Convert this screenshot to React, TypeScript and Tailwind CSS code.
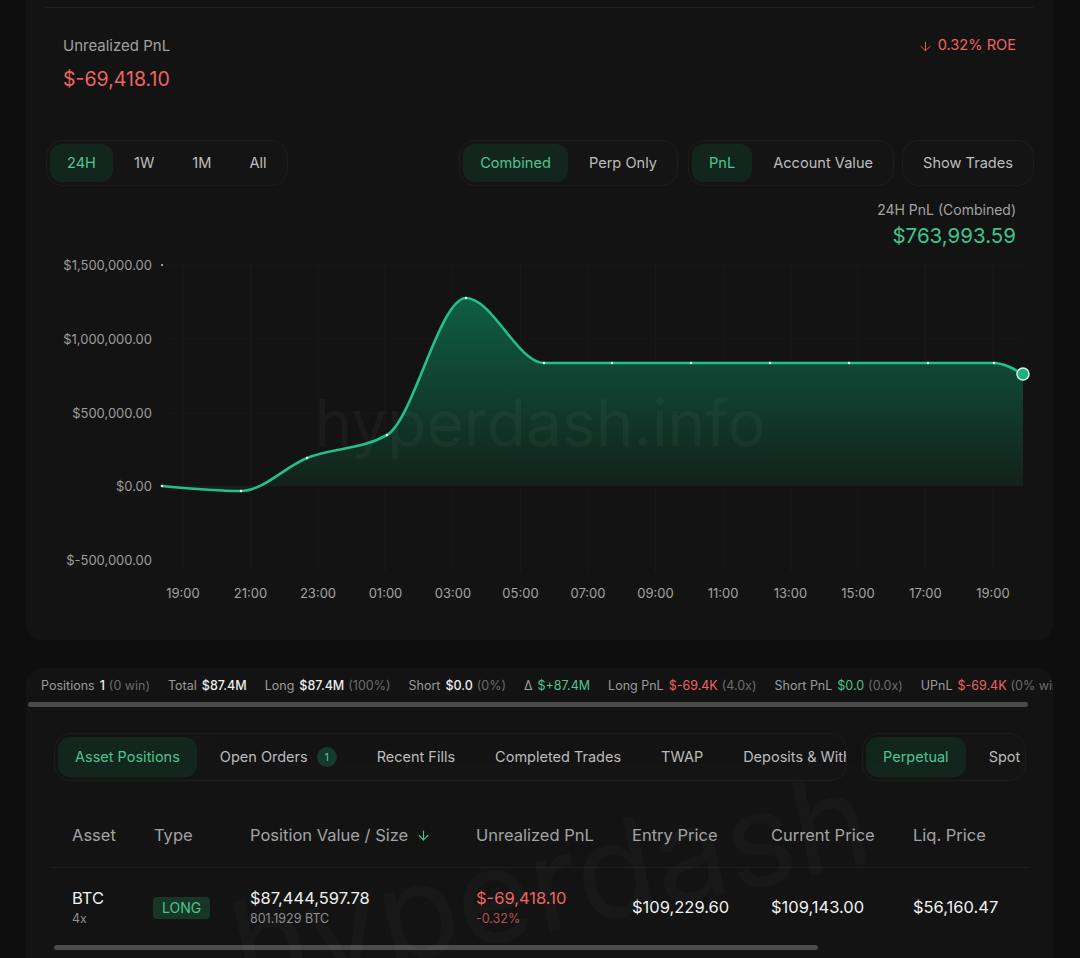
import { ArrowDown } from 'lucide-react';

type Pt = [number, number];

// chart points in page pixels (the svg viewBox is laid over the card)
const points: Pt[] = [
  [162, 486], [241, 491], [307, 458], [387, 435], [466, 298], [544, 363], [612, 363],
  [691, 363], [770, 363], [849, 363], [928, 363], [994, 363], [1023, 374],
];

const yTicks = [
  { y: 265, label: '$1,500,000.00' },
  { y: 339, label: '$1,000,000.00' },
  { y: 413, label: '$500,000.00' },
  { y: 486, label: '$0.00' },
  { y: 560, label: '$-500,000.00' },
];

const xTicks = ['19:00', '21:00', '23:00', '01:00', '03:00', '05:00', '07:00', '09:00', '11:00', '13:00', '15:00', '17:00', '19:00'];

function monotonePath(p: Pt[]) {
  const n = p.length;
  const s: number[] = [];
  for (let i = 0; i < n - 1; i++) s.push((p[i + 1][1] - p[i][1]) / (p[i + 1][0] - p[i][0]));
  const t: number[] = new Array(n).fill(0);
  for (let i = 1; i < n - 1; i++) {
    const h0 = p[i][0] - p[i - 1][0];
    const h1 = p[i + 1][0] - p[i][0];
    const s0 = s[i - 1];
    const s1 = s[i];
    const m = (s0 * h1 + s1 * h0) / (h0 + h1);
    t[i] = (Math.sign(s0) + Math.sign(s1)) * Math.min(Math.abs(s0), Math.abs(s1), 0.5 * Math.abs(m)) || 0;
  }
  t[0] = (3 * s[0] - t[1]) / 2;
  t[n - 1] = (3 * s[n - 2] - t[n - 2]) / 2;
  let d = `M${p[0][0]},${p[0][1]}`;
  for (let i = 0; i < n - 1; i++) {
    const dx = (p[i + 1][0] - p[i][0]) / 3;
    d += ` C${p[i][0] + dx},${p[i][1] + dx * t[i]} ${p[i + 1][0] - dx},${p[i + 1][1] - dx * t[i + 1]} ${p[i + 1][0]},${p[i + 1][1]}`;
  }
  return d;
}

function PnlChart() {
  const line = monotonePath(points);
  const area = `${line} L1023,486 L162,486 Z`;
  const last = points[points.length - 1];
  return (
    <svg width={1027} height={360} viewBox="26 252 1027 360" className="block">
      <defs>
        <linearGradient id="pnlFill" gradientUnits="userSpaceOnUse" x1="0" y1="298" x2="0" y2="486">
          <stop offset="0" stopColor="#0e5e43" />
          <stop offset="1" stopColor="#13211b" />
        </linearGradient>
      </defs>
      {yTicks.map((t) => (
        <line key={t.y} x1={162} x2={1023} y1={t.y} y2={t.y} stroke="#191919" strokeWidth={1} />
      ))}
      {xTicks.map((_, i) => {
        const x = 183 + i * 67.5;
        return <line key={i} x1={x} x2={x} y1={262} y2={572} stroke="#191919" strokeWidth={1} />;
      })}
      <path d={area} fill="url(#pnlFill)" />
      <text
        x={540}
        y={446}
        textAnchor="middle"
        fontSize={64}
        fontFamily="Inter, sans-serif"
        fill="#ffffff"
        fillOpacity={0.035}
      >
        hyperdash.info
      </text>
      <path d={line} fill="none" stroke="#22c08a" strokeWidth={2.6} strokeLinecap="round" />
      {points.slice(0, -1).map(([x, y]) => (
        <circle key={x} cx={x} cy={y} r={1.2} fill="#e8fff5" />
      ))}
      <circle cx={162} cy={265} r={1} fill="#d0d0d0" />
      <circle cx={last[0]} cy={last[1]} r={6} fill="#1cb07e" stroke="#d6f3e6" strokeWidth={1.5} />
      {yTicks.map((t) => (
        <text key={t.label} x={152} y={t.y + 4.5} textAnchor="end" fontSize={13} fontFamily="Inter, sans-serif" fill="#9d9d9d">
          {t.label}
        </text>
      ))}
      {xTicks.map((l, i) => (
        <text key={i} x={183 + i * 67.5} y={597.5} textAnchor="middle" fontSize={13} fontFamily="Inter, sans-serif" fill="#a3a3a3">
          {l}
        </text>
      ))}
    </svg>
  );
}

function Seg({ items, active }: { items: string[]; active?: number }) {
  return (
    <div className="flex gap-1 rounded-2xl border border-[#1d1d1d] bg-[#141414] p-[3px]">
      {items.map((it, i) => (
        <button
          key={it}
          className={
            i === active
              ? 'h-[38px] rounded-xl bg-[#13261e] px-[17px] pt-[1px] text-[14.6px] text-[#4cc58f]'
              : 'h-[38px] rounded-xl px-[17px] pt-[1px] text-[14.6px] text-[#bdbdbd]'
          }
        >
          {it}
        </button>
      ))}
    </div>
  );
}

type Stat = { label: string; value: string; tone?: 'green' | 'red'; note?: string };

const stats: Stat[] = [
  { label: 'Positions', value: '1', note: '(0 win)' },
  { label: 'Total', value: '$87.4M' },
  { label: 'Long', value: '$87.4M', note: '(100%)' },
  { label: 'Short', value: '$0.0', note: '(0%)' },
  { label: 'Δ', value: '$+87.4M', tone: 'green' },
  { label: 'Long PnL', value: '$-69.4K', tone: 'red', note: '(4.0x)' },
  { label: 'Short PnL', value: '$0.0', tone: 'green', note: '(0.0x)' },
  { label: 'UPnL', value: '$-69.4K', tone: 'red', note: '(0% win)' },
];

function StatsBar() {
  return (
    <div className="flex h-[34px] w-[1027px] items-center gap-[18px] overflow-hidden whitespace-nowrap pl-[15px] pt-[3px] text-[12.5px]">
      {stats.map((s) => (
        <div key={s.label} className="flex shrink-0 items-center gap-[5px]">
          <span className="text-[#9b9b9b]">{s.label}</span>
          <span
            className={
              s.tone === 'green'
                ? 'text-[#4cc58f]'
                : s.tone === 'red'
                  ? 'text-[#ef6461]'
                  : 'font-medium text-[#ededed]'
            }
          >
            {s.value}
          </span>
          {s.note && <span className="-ml-[1px] text-[#6b6b6b]">{s.note}</span>}
        </div>
      ))}
    </div>
  );
}

const tabs = ['Asset Positions', 'Open Orders', 'Recent Fills', 'Completed Trades', 'TWAP', 'Deposits & Withdrawals'];

function TabBar() {
  return (
    <div className="ml-[2px] flex items-center gap-[15px]">
      <div className="w-[793px] overflow-hidden rounded-2xl border border-[#1d1d1d] bg-[#141414] p-[3px]">
        <div className="flex gap-[6px] whitespace-nowrap">
          {tabs.map((t, i) => (
            <button
              key={t}
              className={
                i === 0
                  ? 'flex h-[40px] shrink-0 items-center rounded-xl bg-[#13261e] px-[17px] text-[14.5px] text-[#4cc58f]'
                  : 'flex h-[40px] shrink-0 items-center rounded-xl px-[17px] text-[14.5px] text-[#bdbdbd]'
              }
            >
              {t}
              {t === 'Open Orders' && (
                <span className="ml-[9px] flex h-[20px] w-[20px] items-center justify-center rounded-full bg-[#163a2c] text-[11px] text-[#4cc58f]">
                  1
                </span>
              )}
            </button>
          ))}
        </div>
      </div>
      <div className="w-[164px] overflow-hidden rounded-2xl border border-[#1d1d1d] bg-[#141414] p-[3px]">
        <div className="flex gap-[6px] whitespace-nowrap">
          <button className="flex h-[40px] shrink-0 items-center rounded-xl bg-[#13261e] px-[17px] text-[14.5px] text-[#4cc58f]">
            Perpetual
          </button>
          <button className="flex h-[40px] shrink-0 items-center rounded-xl px-[17px] text-[14.5px] text-[#bdbdbd]">Spot</button>
        </div>
      </div>
    </div>
  );
}

const cols = 'grid grid-cols-[82px_96px_226px_156px_139px_142px_135px] pl-[20px]';

function PositionsTable() {
  return (
    <div className="mt-[23px] w-[976px]">
      <div className={`${cols} h-[64px] items-center border-b border-[#1e1e1e] text-[16.5px] text-[#a3a3a3]`}>
        <span>Asset</span>
        <span>Type</span>
        <span className="flex items-center">
          Position Value / Size
          <ArrowDown className="ml-[8px] h-[15px] w-[15px] text-[#4cc58f]" strokeWidth={1.75} />
        </span>
        <span>Unrealized PnL</span>
        <span>Entry Price</span>
        <span>Current Price</span>
        <span>Liq. Price</span>
      </div>
      <div className={`${cols} h-[77px] items-center pt-[2px] text-[16.5px] text-[#f0f0f0]`}>
        <div className="flex flex-col">
          <span className="leading-[22px]">BTC</span>
          <span className="text-[12.5px] leading-[20px] text-[#8d8d8d]">4x</span>
        </div>
        <div>
          <span className="ml-[-1px] inline-flex h-[22px] items-center rounded-[4px] bg-[#173626] px-[9px] text-[14px] text-[#4cc58f]">
            LONG
          </span>
        </div>
        <div className="flex flex-col">
          <span className="leading-[22px]">$87,444,597.78</span>
          <span className="text-[12.5px] leading-[20px] text-[#8d8d8d]">801.1929 BTC</span>
        </div>
        <div className="flex flex-col">
          <span className="leading-[22px] text-[#ef6461]">$-69,418.10</span>
          <span className="text-[12.5px] leading-[20px] text-[#b35150]">-0.32%</span>
        </div>
        <span>$109,229.60</span>
        <span>$109,143.00</span>
        <span>$56,160.47</span>
      </div>
      <div className="ml-[2px] h-[5px] w-[764px] rounded-full bg-[#4a4a4a]" />
    </div>
  );
}

export default function App() {
  return (
    <main className="min-h-screen overflow-hidden bg-[#0e0e0e] font-['Inter',sans-serif] text-[#ededed]">
      <section className="ml-[26px] w-[1027px] rounded-b-2xl bg-[#131313] px-[19px] pb-[28px] pt-[7px]">
        <div className="h-px bg-[#1e1e1e]" />
        <div className="flex justify-between px-[18px] pt-[28px]">
          <div>
            <div className="text-[15px] leading-[20px] text-[#a0a0a0]">Unrealized PnL</div>
            <div className="mt-[9px] text-[19.5px] leading-[28px] text-[#ef6461]">$-69,418.10</div>
          </div>
          <div className="flex h-[20px] items-center gap-[5px] text-[14.6px] text-[#ef6461]">
            <ArrowDown className="h-[15px] w-[15px]" strokeWidth={1.5} />
            0.32% ROE
          </div>
        </div>

        <div className="mt-[47px] flex items-center">
          <div className="ml-px">
            <Seg items={['24H', '1W', '1M', 'All']} active={0} />
          </div>
          <div className="ml-auto mr-[10px]">
            <Seg items={['Combined', 'Perp Only']} active={0} />
          </div>
          <div className="mr-[8px]">
            <Seg items={['PnL', 'Account Value']} active={0} />
          </div>
          <Seg items={['Show Trades']} />
        </div>

        <div className="mt-[14px] pr-[18px] text-right">
          <div className="text-[14px] leading-[20px] text-[#a3a3a3]">24H PnL (Combined)</div>
          <div className="mt-[2px] text-[20.5px] leading-[28px] text-[#3ec58d]">$763,993.59</div>
        </div>

        <div className="-mx-[19px] mt-[2px]">
          <PnlChart />
        </div>
      </section>

      <section className="relative ml-[26px] mt-[28px] w-[1027px] overflow-hidden rounded-t-2xl bg-[#131313] pb-[20px]">
        <StatsBar />
        <div className="mx-[2px] h-[5px] w-[1000px] rounded-full bg-[#4a4a4a]" />
        <div className="px-[26px] pt-[26px]">
          <TabBar />
          <PositionsTable />
        </div>
        <div className="pointer-events-none absolute left-[200px] top-[150px] rotate-[-12deg] select-none text-[130px] leading-none text-white opacity-[0.02]">
          hyperdash
        </div>
      </section>
    </main>
  );
}
